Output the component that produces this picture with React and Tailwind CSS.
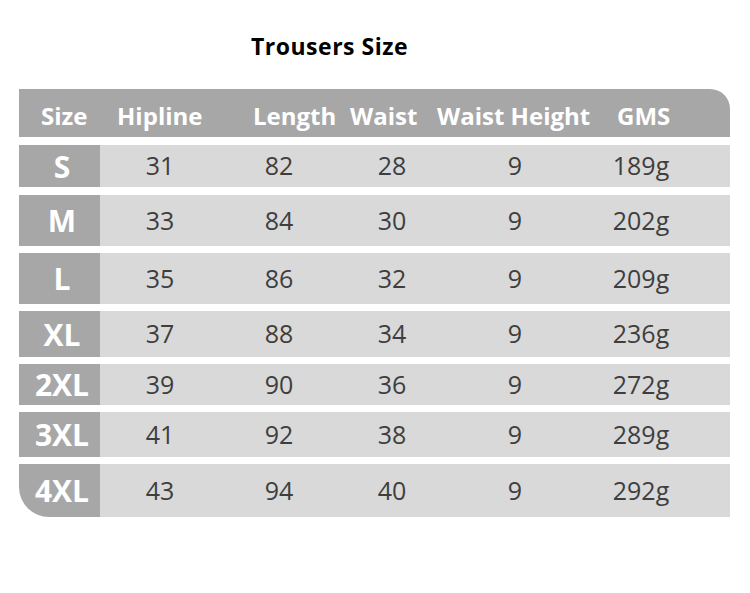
const rows = [
  { size: 'S', h: 'h-[42px]', mt: 'mt-[8px]', vals: ['31', '82', '28', '9', '189g'] },
  { size: 'M', h: 'h-[51px]', mt: 'mt-[8px]', vals: ['33', '84', '30', '9', '202g'] },
  { size: 'L', h: 'h-[51px]', mt: 'mt-[7px]', vals: ['35', '86', '32', '9', '209g'] },
  { size: 'XL', h: 'h-[46px]', mt: 'mt-[7px]', vals: ['37', '88', '34', '9', '236g'] },
  { size: '2XL', h: 'h-[41px]', mt: 'mt-[7px]', vals: ['39', '90', '36', '9', '272g'] },
  { size: '3XL', h: 'h-[45px]', mt: 'mt-[7px]', vals: ['41', '92', '38', '9', '289g'] },
  { size: '4XL', h: 'h-[53px]', mt: 'mt-[7px]', vals: ['43', '94', '40', '9', '292g'], last: true },
];

const headers = [
  { label: 'Size', w: 'w-[98px]', pl: 'pl-[22px]' },
  { label: 'Hipline', w: 'w-[136px]' },
  { label: 'Length', w: 'w-[97px]' },
  { label: 'Waist', w: 'w-[87px]' },
  { label: 'Waist Height', w: 'w-[180px]' },
  { label: 'GMS', w: 'w-[113px]' },
];

const dataCols = ['w-[120px]', 'w-[118px]', 'w-[108px]', 'w-[138px]', 'w-[114px]'];

export default function App() {
  return (
    <div className="w-[750px] h-[593px] bg-white font-['Open_Sans','Noto_Sans',sans-serif]">
      <div className="pt-[30px] pl-[251px] h-[89px]">
        <h1 className="text-[23px] font-bold text-black leading-[32px] tracking-[0.5px]">Trousers Size</h1>
      </div>

      <div className="ml-[19px] w-[711px]">
        {/* header */}
        <div className="flex items-center h-[48px] pt-[6px] bg-[#a8a7a8] rounded-tr-[20px] text-white text-[24px] font-bold">
          {headers.map((h) => (
            <div key={h.label} className={`${h.w} ${h.pl || ''} shrink-0 whitespace-nowrap`}>
              {h.label}
            </div>
          ))}
        </div>

        {rows.map((r) => (
          <div key={r.size} className={`flex ${r.h} ${r.mt}`}>
            <div
              className={`w-[81px] shrink-0 pl-[5px] bg-[#a8a7a8] flex items-center justify-center text-white text-[30px] font-bold ${
                r.last ? 'rounded-bl-[30px]' : ''
              }`}
            >
              {r.size}
            </div>
            <div className="flex-1 flex items-center bg-[#d9d9d9] text-[#3e3e3e] text-[25px]">
              {r.vals.map((v, i) => (
                <div key={i} className={`${dataCols[i]} shrink-0 text-center`}>
                  {v}
                </div>
              ))}
            </div>
          </div>
        ))}
      </div>
    </div>
  );
}
